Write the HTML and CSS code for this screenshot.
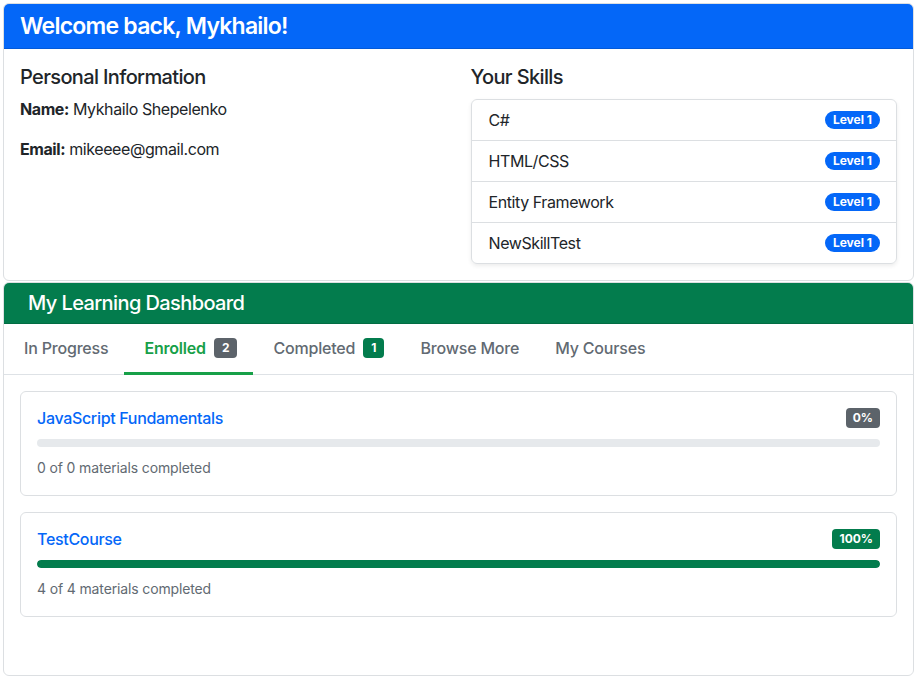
FILE: index.html
```html
<!DOCTYPE html>
<html lang="en">
<head>
<meta charset="utf-8">
<title>Dashboard</title>
<link rel="stylesheet" href="styles.css">
</head>
<body>
<div class="page">
  <section class="card card-profile">
    <header class="card-header header-blue">
      <h1 class="welcome">Welcome back, Mykhailo!</h1>
    </header>
    <div class="card-body profile">
      <div class="profile-col">
        <h2 class="section-title">Personal Information</h2>
        <p class="info"><strong>Name:</strong> Mykhailo Shepelenko</p>
        <p class="info"><strong>Email:</strong> mikeeee@gmail.com</p>
      </div>
      <div class="profile-col">
        <h2 class="section-title skills-title">Your Skills</h2>
        <ul class="skills">
          <li class="skill"><span>C#</span><span class="pill">Level 1</span></li>
          <li class="skill"><span>HTML/CSS</span><span class="pill">Level 1</span></li>
          <li class="skill"><span>Entity Framework</span><span class="pill">Level 1</span></li>
          <li class="skill"><span>NewSkillTest</span><span class="pill">Level 1</span></li>
        </ul>
      </div>
    </div>
  </section>

  <section class="card">
    <header class="card-header header-green">
      <h2 class="dash-title">My Learning Dashboard</h2>
    </header>
    <nav class="tabs">
      <a class="tab">In Progress</a>
      <a class="tab active">Enrolled <span class="count count-gray">2</span></a>
      <a class="tab">Completed <span class="count count-green">1</span></a>
      <a class="tab">Browse More</a>
      <a class="tab">My Courses</a>
    </nav>
    <div class="tab-content">
      <div class="course">
        <div class="course-head">
          <a class="course-title">JavaScript Fundamentals</a>
          <span class="pct pct-gray">0%</span>
        </div>
        <div class="progress"><div class="progress-fill" style="width:0%"></div></div>
        <p class="materials">0 of 0 materials completed</p>
      </div>
      <div class="course">
        <div class="course-head">
          <a class="course-title">TestCourse</a>
          <span class="pct pct-green">100%</span>
        </div>
        <div class="progress"><div class="progress-fill" style="width:100%"></div></div>
        <p class="materials">4 of 4 materials completed</p>
      </div>
    </div>
  </section>
</div>
</body>
</html>
```

FILE: styles.css
```css
* { box-sizing: border-box; }

html, body {
  margin: 0;
  padding: 0;
  background: #fff;
}

body {
  font-family: Inter, "Liberation Sans", sans-serif;
  font-size: 16px;
  line-height: 1.5;
  color: #212529;
  letter-spacing: -0.026em;
}

.page {
  padding: 3px 0 0 3px;
}

.card {
  border: 1px solid #dcdfe2;
  border-radius: 6px;
  background: #fff;
  overflow: hidden;
}

.card-profile { margin-bottom: 1px; }

.card-header {
  padding: 8px 16px;
  border-bottom: 1px solid rgba(0,0,0,0.12);
}

.header-blue { background: #0467f8; }
.header-green { background: #037c4d; padding: 8px 24px; }

.welcome {
  margin: 0;
  font-size: 23px;
  line-height: 28px;
  font-weight: 600;
  color: #fff;
  letter-spacing: -0.033em;
}

.dash-title {
  margin: 0;
  font-size: 20px;
  line-height: 24px;
  font-weight: 500;
  color: #fff;
  letter-spacing: -0.03em;
}

.card-body { padding: 16px; }

.profile {
  display: grid;
  grid-template-columns: 1fr 1fr;
  column-gap: 24px;
}

.section-title {
  margin: 0 0 8px;
  font-size: 20px;
  line-height: 24px;
  font-weight: 500;
  letter-spacing: -0.032em;
}

.skills-title { margin-bottom: 10px; }

.info {
  margin: 0 0 16px;
  font-size: 16px;
  line-height: 24px;
}
.info:last-child { margin-bottom: 0; }
.info strong { font-weight: 700; }

.skills {
  list-style: none;
  margin: 0;
  padding: 0;
  border: 1px solid #dcdfe2;
  border-radius: 6px;
  box-shadow: 0 2px 4px rgba(0,0,0,0.075);
}

.skill {
  display: flex;
  justify-content: space-between;
  align-items: center;
  padding: 8px 16px 8px 17px;
  font-size: 16px;
  line-height: 24px;
  border-top: 1px solid #dcdfe2;
}
.skill:first-child { border-top: none; }

.pill {
  background: #0467f8;
  color: #fff;
  font-size: 12px;
  font-weight: 700;
  line-height: 1;
  padding: 3px 8px;
  border-radius: 10px;
  letter-spacing: 0;
}

.tabs {
  display: flex;
  border-bottom: 1px solid #dee2e6;
}

.tab {
  display: flex;
  align-items: center;
  padding: 12px 16px 12px 20px;
  font-size: 16px;
  line-height: 24px;
  font-weight: 500;
  color: #626a72;
  border-bottom: 3px solid transparent;
  margin-bottom: -1px;
  letter-spacing: -0.012em;
}

.tab.active {
  color: #17a048;
  font-weight: 600;
  border-bottom-color: #17a048;
}

.count {
  margin-left: 8px;
  font-size: 12px;
  font-weight: 700;
  line-height: 1;
  color: #fff;
  padding: 4px 8px;
  border-radius: 4px;
  letter-spacing: 0;
}
.count-gray { background: #5c636a; }
.count-green { background: #037c4d; }

.tab-content {
  padding: 16px 16px 42px;
}

.course {
  border: 1px solid #dcdfe2;
  border-radius: 6px;
  padding: 16px;
  margin-bottom: 16px;
}

.course-head {
  display: flex;
  justify-content: space-between;
  align-items: center;
  height: 20px;
  margin-bottom: 11px;
}

.course-title {
  color: #0467f8;
  font-size: 16px;
  font-weight: 500;
  line-height: 20px;
  letter-spacing: -0.02em;
}

.pct {
  color: #fff;
  font-size: 12px;
  font-weight: 700;
  line-height: 1;
  padding: 4px 7px;
  border-radius: 4px;
  letter-spacing: 0;
}
.pct-gray { background: #5c636a; }
.pct-green { background: #037c4d; }

.progress {
  height: 8px;
  border-radius: 4px;
  background: #e6e9ec;
  overflow: hidden;
  margin-bottom: 10px;
}

.progress-fill {
  height: 100%;
  background: #037c4d;
  border-radius: 4px;
}

.materials {
  margin: 0;
  font-size: 14px;
  line-height: 22px;
  color: #626a72;
  letter-spacing: -0.01em;
}
```
